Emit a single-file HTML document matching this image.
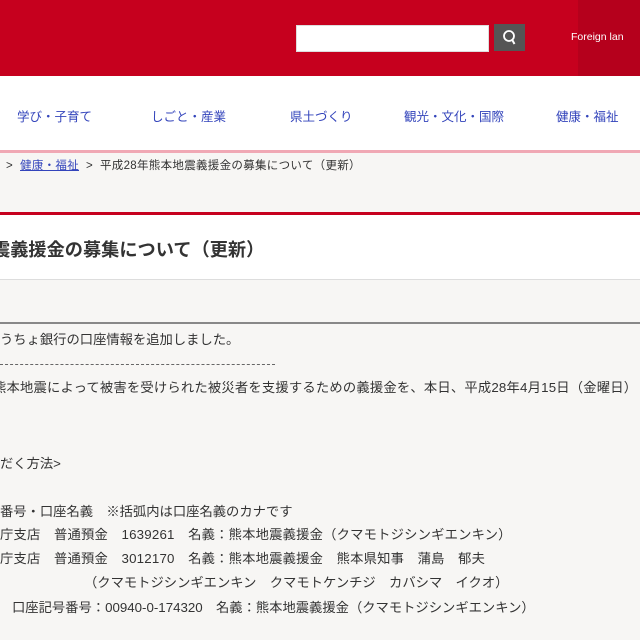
<!DOCTYPE html>
<html><head><meta charset="utf-8"><style>
body{margin:0;width:640px;height:640px;overflow:hidden;background:#f7f6f4;font-family:"Liberation Sans","Noto Sans CJK JP",sans-serif;position:relative}
.a{position:absolute;white-space:nowrap}
.t{font-size:13.3px;color:#333}
</style></head><body>
<div class="a" style="left:0;top:0;width:640px;height:76px;background:#c6001e"></div>
<div class="a" style="left:578px;top:0;width:62px;height:76px;background:#b5001c"></div>
<div class="a" style="left:296px;top:25px;width:193px;height:27px;background:#fff;border:1px solid #ddd;box-sizing:border-box"></div>
<div class="a" style="left:494px;top:24px;width:31px;height:27px;background:#555"></div>
<svg class="a" style="left:494px;top:24px" width="31" height="27"><circle cx="15" cy="12" r="5" fill="none" stroke="#fff" stroke-width="1.8"/><line x1="18" y1="15.5" x2="20.5" y2="20" stroke="#fff" stroke-width="2"/></svg>
<div class="a" style="left:571px;top:31px;font-size:10.5px;color:#fff">Foreign lan</div>
<div class="a" style="left:0;top:76px;width:640px;height:75px;background:#fff"></div>
<div class="a" style="left:0;top:150px;width:640px;height:3px;background:#f0a8b4"></div>
<div class="a" style="left:17px;top:106px;font-size:12.5px;color:#3344bb">学び・子育て</div>
<div class="a" style="left:151px;top:106px;font-size:12.5px;color:#3344bb">しごと・産業</div>
<div class="a" style="left:290px;top:106px;font-size:12.5px;color:#3344bb">県土づくり</div>
<div class="a" style="left:404px;top:106px;font-size:12.5px;color:#3344bb">観光・文化・国際</div>
<div class="a" style="left:556px;top:106px;font-size:12.5px;color:#3344bb">健康・福祉</div>
<div class="a" style="left:6px;top:157px;font-size:11.5px;color:#333;letter-spacing:0.3px">&gt; &nbsp;<span style="color:#3344bb;text-decoration:underline">健康・福祉</span> &nbsp;&gt; &nbsp;平成28年熊本地震義援金の募集について（更新）</div>
<div class="a" style="left:0;top:212px;width:640px;height:3px;background:#c6001e"></div>
<div class="a" style="left:0;top:215px;width:640px;height:64px;background:#fff;border-bottom:1px solid #ddd"></div>
<div class="a" style="left:-8px;top:236px;font-size:18.2px;font-weight:bold;color:#333">震義援金の募集について（更新）</div>
<div class="a" style="left:0;top:322px;width:640px;height:2px;background:#888"></div>
<div class="a t" style="left:0;top:329px">うちょ銀行の口座情報を追加しました。</div>
<div class="a" style="left:0;top:364px;width:275px;border-top:1px dashed #666"></div>
<div class="a t" style="left:-7px;top:377px;letter-spacing:0.2px">熊本地震によって被害を受けられた被災者を支援するための義援金を、本日、平成28年4月15日（金曜日）</div>
<div class="a t" style="left:0;top:453px">だく方法&gt;</div>
<div class="a t" style="left:0;top:501px">番号・口座名義　※括弧内は口座名義のカナです</div>
<div class="a t" style="left:0;top:524px;letter-spacing:0.2px">庁支店　普通預金　1639261　名義：熊本地震義援金（クマモトジシンギエンキン）</div>
<div class="a t" style="left:0;top:548px;letter-spacing:0.2px">庁支店　普通預金　3012170　名義：熊本地震義援金　熊本県知事　蒲島　郁夫</div>
<div class="a t" style="left:84px;top:572px">（クマモトジシンギエンキン　クマモトケンチジ　カバシマ　イクオ）</div>
<div class="a t" style="left:12px;top:597px">口座記号番号：00940-0-174320　名義：熊本地震義援金（クマモトジシンギエンキン）</div>
</body></html>
